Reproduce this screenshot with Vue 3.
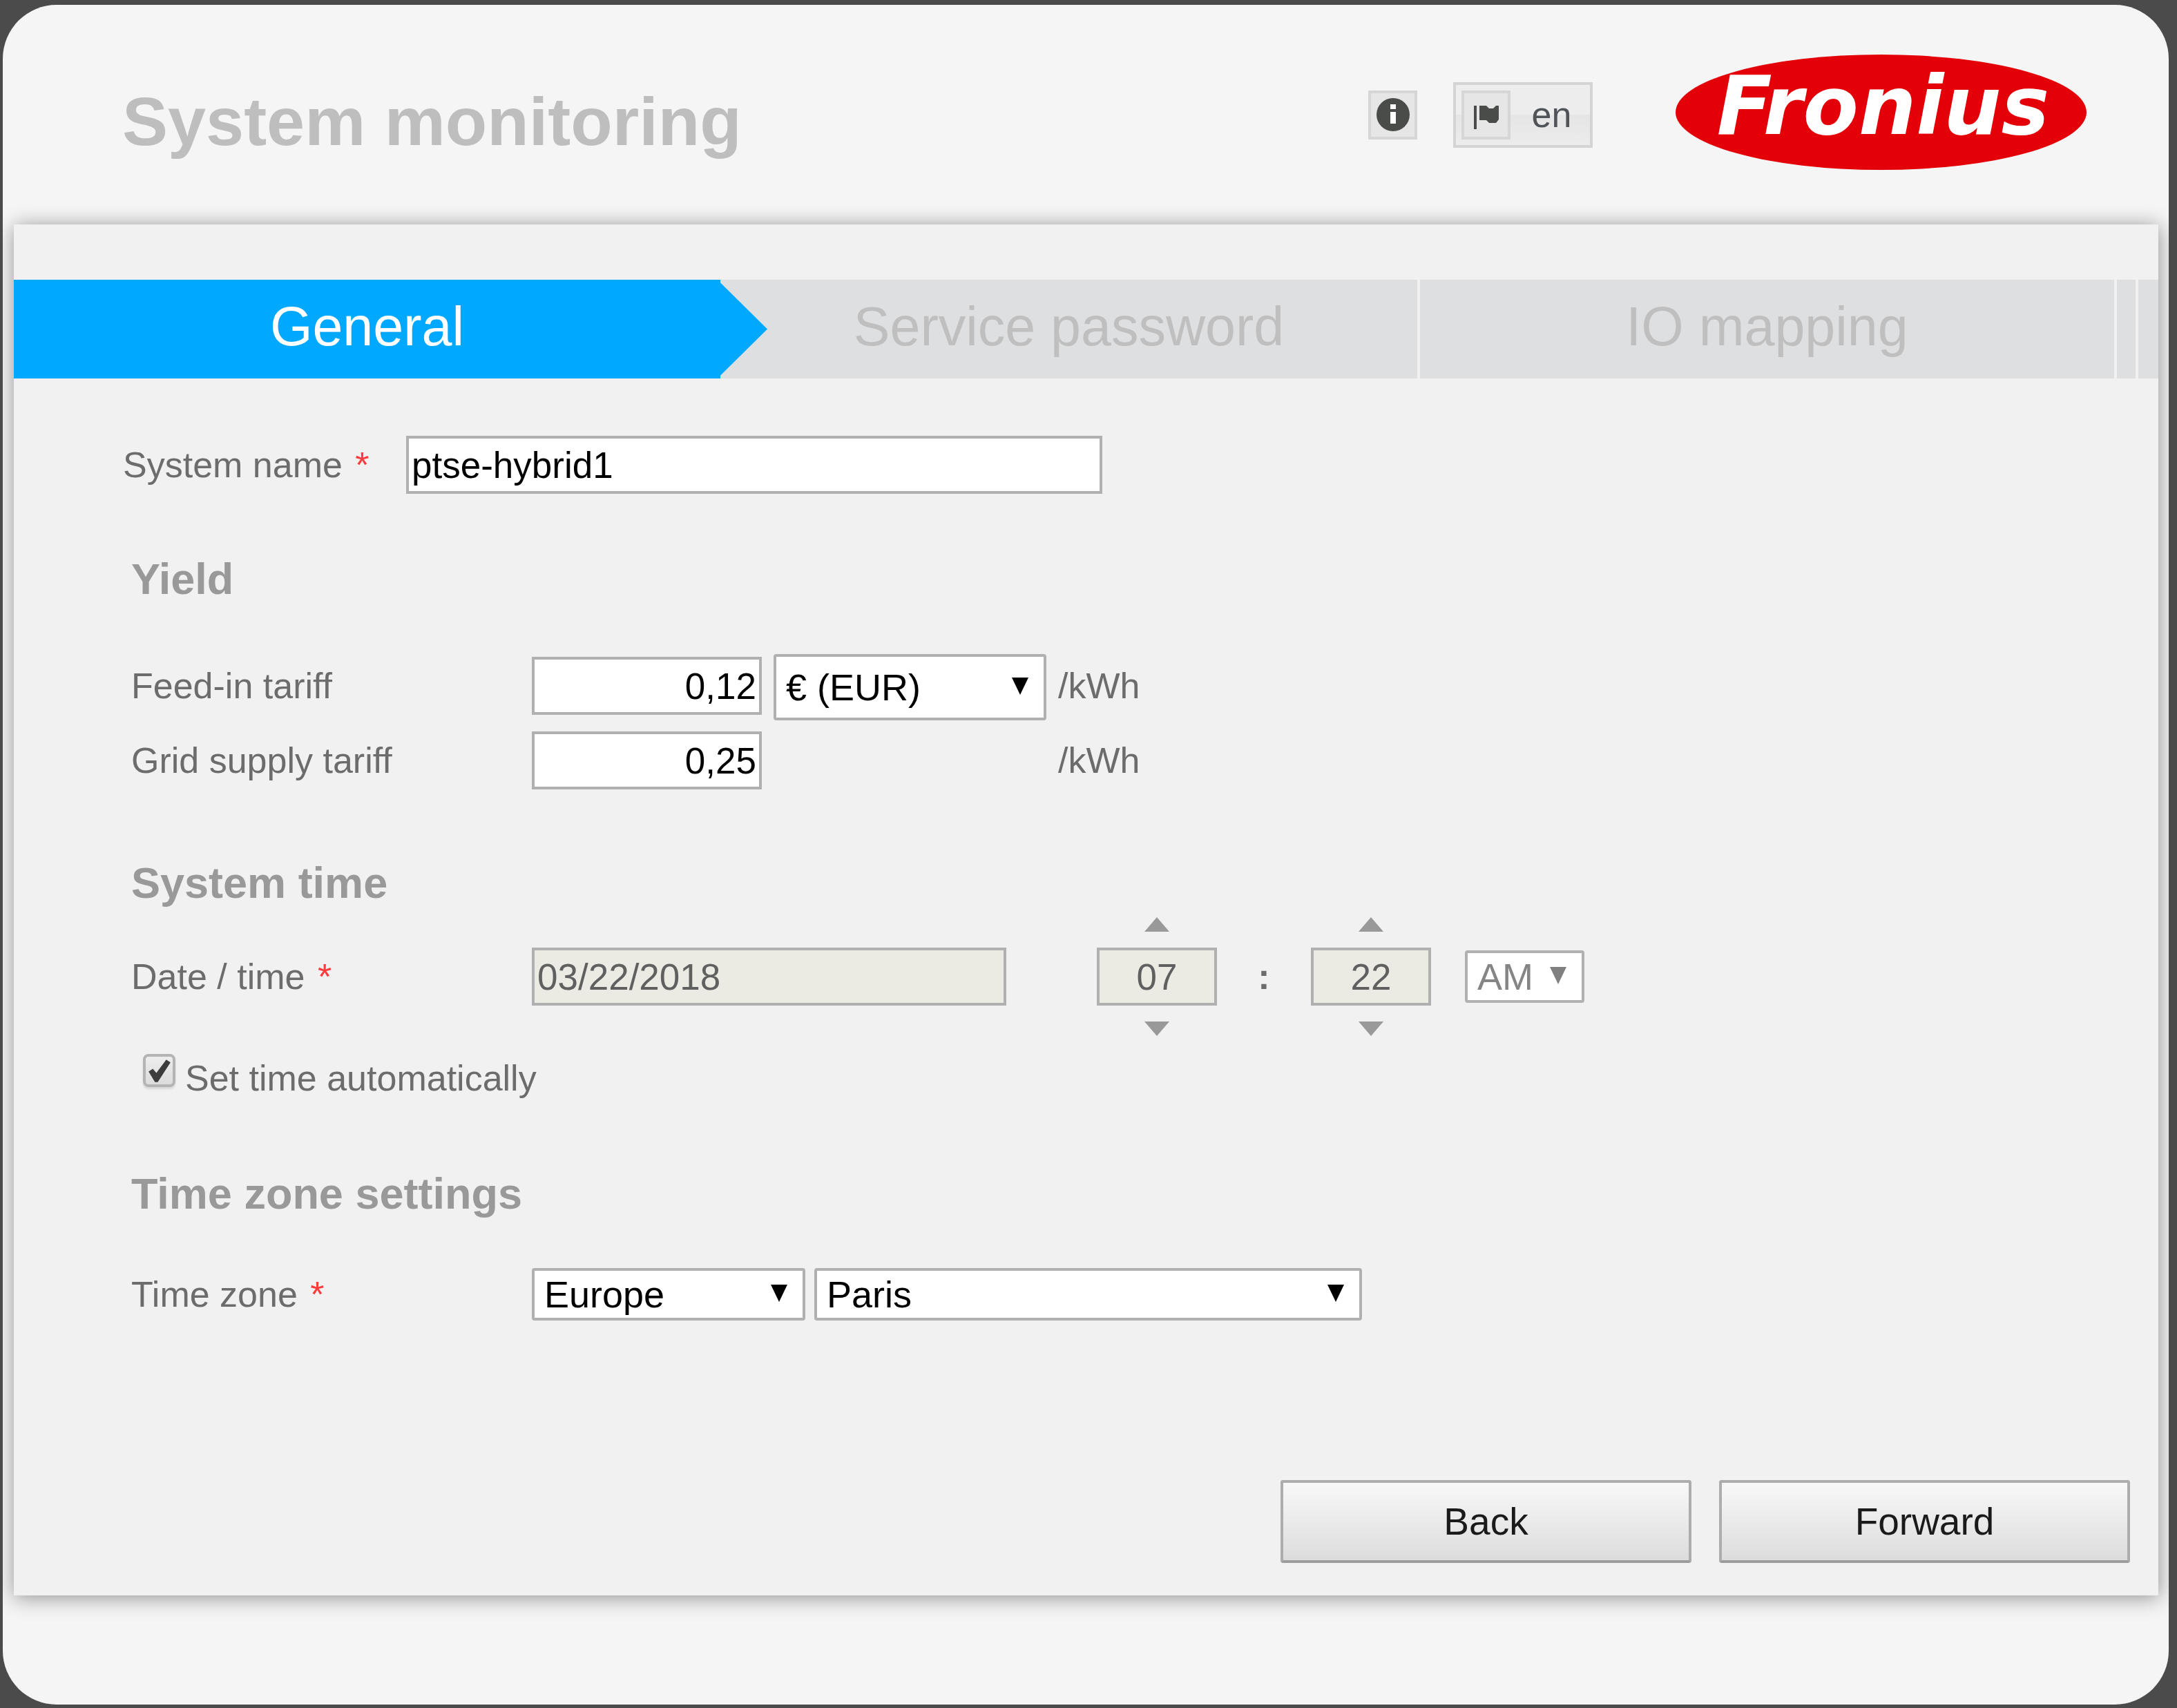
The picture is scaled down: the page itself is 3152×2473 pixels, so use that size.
<script setup>
import { ref } from 'vue'

const steps = ['General', 'Service password', 'IO mapping']
const activeStep = ref(0)

const systemName = ref('ptse-hybrid1')
const feedIn = ref('0,12')
const gridSupply = ref('0,25')
const currency = ref('€ (EUR)')
const date = ref('03/22/2018')
const hours = ref('07')
const minutes = ref('22')
const period = ref('AM')
const autoTime = ref(true)
const region = ref('Europe')
const city = ref('Paris')
</script>

<template>
  <div class="card">
    <header class="header">
      <h1 class="title">System monitoring</h1>
      <button class="icon-box" type="button" aria-label="Information">
        <svg class="icon-info" viewBox="0 0 48 48" aria-hidden="true">
          <circle cx="24" cy="24" r="24" fill="#4a4c4a" />
          <rect x="20" y="9" width="8" height="7" fill="#fff" />
          <path d="M20 20h8v17h-8z" fill="#fff" />
        </svg>
      </button>
      <button class="lang" type="button">
        <span class="icon-box">
          <svg class="icon-flag" viewBox="0 0 36 34" aria-hidden="true">
            <path d="M0 0h4v34H0zM8 0h10l4 4h6l4-4h4v20l-4 5H22l-4-4H8z" fill="#4a4c4a" />
          </svg>
        </span>
        <span class="lang-code">en</span>
      </button>
      <div class="logo">Fronius</div>
    </header>

    <main class="panel">
      <nav class="steps">
        <a
          v-for="(step, i) in steps"
          :key="step"
          href="#"
          class="step"
          :class="{ active: i === activeStep }"
          @click.prevent="activeStep = i"
        >{{ step }}</a>
        <span class="step"></span>
        <span class="step last"></span>
      </nav>

      <form class="form" @submit.prevent>
        <div class="row name-row">
          <label class="name-label" for="system-name">System name <span class="req">*</span></label>
          <input id="system-name" v-model="systemName" class="field name-field" type="text" />
        </div>

        <section class="section">
          <h2 class="heading">Yield</h2>
          <div class="tariffs">
            <div class="row tariff">
              <label class="label" for="feed-in">Feed-in tariff</label>
              <input id="feed-in" v-model="feedIn" class="field amount" type="text" />
              <span class="select currency">
                <select v-model="currency" aria-label="Currency"><option>€ (EUR)</option></select>
                <svg class="arrow" viewBox="0 0 24 25" aria-hidden="true"><path d="M0 0h24L12 25z" /></svg>
              </span>
              <span>/kWh</span>
            </div>
            <div class="row tariff">
              <label class="label" for="grid-supply">Grid supply tariff</label>
              <input id="grid-supply" v-model="gridSupply" class="field amount" type="text" />
              <span class="currency-gap"></span>
              <span>/kWh</span>
            </div>
          </div>
        </section>

        <section class="section">
          <h2 class="heading">System time</h2>
          <div class="row time-row">
            <label class="label" for="date">Date / time <span class="req">*</span></label>
            <input id="date" v-model="date" class="field date" type="text" disabled />
            <div class="spinner">
              <button type="button" aria-label="Hour up"><svg viewBox="0 0 36 21"><path d="M18 0l18 21H0z" /></svg></button>
              <input v-model="hours" class="field" type="text" aria-label="Hours" disabled />
              <button type="button" aria-label="Hour down"><svg viewBox="0 0 36 21"><path d="M0 0h36L18 21z" /></svg></button>
            </div>
            <span class="colon">:</span>
            <div class="spinner">
              <button type="button" aria-label="Minute up"><svg viewBox="0 0 36 21"><path d="M18 0l18 21H0z" /></svg></button>
              <input v-model="minutes" class="field" type="text" aria-label="Minutes" disabled />
              <button type="button" aria-label="Minute down"><svg viewBox="0 0 36 21"><path d="M0 0h36L18 21z" /></svg></button>
            </div>
            <span class="select period">
              <select v-model="period" aria-label="AM or PM" disabled><option>AM</option><option>PM</option></select>
              <svg class="arrow" viewBox="0 0 24 25" aria-hidden="true"><path d="M0 0h24L12 25z" /></svg>
            </span>
          </div>
          <div class="auto">
            <span class="check">
              <input id="auto-time" v-model="autoTime" type="checkbox" />
              <svg v-if="autoTime" viewBox="0 0 46 48" aria-hidden="true">
                <path d="M8 25l6-4 5 6L33 8l6 4-18 28h-4z" fill="#3c3c3c" />
              </svg>
            </span>
            <label for="auto-time">Set time automatically</label>
          </div>
        </section>

        <section class="section zone">
          <h2 class="heading">Time zone settings</h2>
          <div class="row zone-row">
            <label class="label" for="region">Time zone <span class="req">*</span></label>
            <span class="select region">
              <select id="region" v-model="region"><option>Europe</option></select>
              <svg class="arrow" viewBox="0 0 24 25" aria-hidden="true"><path d="M0 0h24L12 25z" /></svg>
            </span>
            <span class="select city">
              <select v-model="city" aria-label="City"><option>Paris</option></select>
              <svg class="arrow" viewBox="0 0 24 25" aria-hidden="true"><path d="M0 0h24L12 25z" /></svg>
            </span>
          </div>
        </section>

        <div class="actions">
          <button class="action" type="button">Back</button>
          <button class="action" type="submit">Forward</button>
        </div>
      </form>
    </main>
  </div>
</template>

<style>
body {
  background: #4b4b4b;
}

#app {
  display: flow-root;
}
</style>

<style scoped>
* {
  box-sizing: border-box;
}

.card {
  margin: 7px 12px 5px 4px;
  min-height: calc(100vh - 12px);
  border-radius: 78px;
  background: #f5f5f5;
  overflow: hidden;
  font-family: "Liberation Sans", Arial, sans-serif;
  font-size: 52px;
  line-height: 70px;
  color: #6c6c6c;
}

button,
input,
select {
  margin: 0;
  padding: 0;
  border: 0;
  border-radius: 0;
  font-family: inherit;
  font-size: 54px;
  color: #000;
}

/* Header */
.header {
  display: flex;
  align-items: center;
  height: 318px;
  padding: 0 119px 0 173px;
}

.title {
  margin: 20px auto 0 0;
  font-size: 99px;
  line-height: 112px;
  color: #bebebe;
}

.icon-box {
  display: flex;
  align-items: center;
  justify-content: center;
  width: 71px;
  height: 71px;
  border: 4px solid #d6d6d6;
  background: #e6e6e6;
}

.icon-info {
  width: 48px;
  height: 48px;
}

.icon-flag {
  width: 36px;
  height: 34px;
  margin-top: 8px;
}

.lang {
  display: flex;
  align-items: center;
  width: 202px;
  height: 95px;
  margin: 0 120px 0 52px;
  padding: 0 8px;
  border: 4px solid #d4d4d4;
  background: linear-gradient(#ededed 50%, #e5e5e5 50%, #ececec);
}

.lang-code {
  flex: 1;
  padding-left: 12px;
  text-align: center;
  font-size: 52px;
  line-height: 60px;
  color: #505458;
}

.logo {
  width: 595px;
  height: 167px;
  margin-bottom: 8px;
  padding-left: 6px;
  border-radius: 50%;
  background: #e30008;
  color: #fff;
  font-family: "DejaVu Sans", sans-serif;
  font-size: 117px;
  font-weight: bold;
  font-style: italic;
  line-height: 150px;
  text-align: center;
}

/* Panel and wizard steps */
.panel {
  margin: 0 15px 0 16px;
  padding-top: 80px;
  background: #f1f1f1;
  box-shadow: 1px 3px 28px rgba(0, 0, 0, 0.42);
}

.steps {
  display: grid;
  grid-template-columns: 1023fr 1013fr 1009fr 31px 29px;
}

.step {
  position: relative;
  height: 143px;
  border-right: 4px solid #f1f1f1;
  background: #dedfe1;
  color: #bfbfbf;
  font-size: 79px;
  line-height: 135px;
  text-align: center;
  text-decoration: none;
  white-space: nowrap;
}

.step.last {
  border-right: 0;
}

.step.active {
  border-right: 0;
  background: #00a9ff;
  color: #fff;
}

.step.active::after {
  content: "";
  position: absolute;
  z-index: 1;
  top: 0;
  left: 100%;
  width: 68px;
  height: 100%;
  background: #00a9ff;
  clip-path: polygon(0 3%, 100% 50%, 0 97%);
}

/* Form */
.form {
  padding: 83px 41px 47px 158px;
}

.row {
  display: flex;
  align-items: center;
}

.section {
  margin-top: 87px;
  padding-left: 12px;
}

.heading {
  margin: 0;
  font-size: 63px;
  line-height: 72px;
  color: #999;
}

.label {
  width: 580px;
}

.name-label {
  width: 410px;
}

.req {
  margin-left: 4px;
  color: #ff3b3b;
}

.field {
  height: 84px;
  padding: 0 4px;
  border: 4px solid #b0b0b0;
  background: #fff;
  font-size: 53px;
}

.field:disabled {
  background: #ebebe4;
  color: #606060;
}

.name-field {
  width: 1008px;
}

.tariffs {
  margin-top: 65px;
}

.tariff {
  height: 108px;
}

.amount {
  width: 333px;
  margin-right: 17px;
  text-align: right;
}

.select {
  position: relative;
  height: 76px;
}

.select select {
  display: block;
  width: 100%;
  height: 100%;
  padding: 0 14px;
  border: 4px solid #b0b0b0;
  border-radius: 4px;
  background: #fff;
  appearance: none;
}

.select select:disabled {
  color: #858585;
  opacity: 1;
}

.arrow {
  position: absolute;
  top: calc(50% - 14px);
  right: 26px;
  width: 24px;
  height: 25px;
  fill: #000;
  pointer-events: none;
}

.period .arrow {
  fill: #808080;
}

.currency,
.currency-gap {
  width: 395px;
  margin-right: 17px;
}

.currency {
  height: 96px;
  margin-top: 4px;
}

.time-row {
  margin-top: 14px;
}

.date {
  width: 687px;
  margin-right: 131px;
}

.spinner {
  display: flex;
  flex-direction: column;
  align-items: center;
  gap: 23px;
  width: 174px;
}

.spinner .field {
  width: 100%;
  text-align: center;
}

.spinner button {
  width: 36px;
  height: 21px;
  background: none;
}

.spinner svg {
  display: block;
  fill: #999;
}

.colon {
  width: 136px;
  text-align: center;
  font-weight: bold;
}

.period {
  width: 173px;
  margin-left: 49px;
}

.auto {
  display: flex;
  gap: 14px;
  margin: 26px 0 0 17px;
}

.check {
  position: relative;
  width: 47px;
  height: 48px;
}

.check input {
  display: block;
  width: 100%;
  height: 100%;
  border: 4px solid #b4b4b4;
  border-radius: 8px;
  background: linear-gradient(#ededed, #dcdcdc);
  box-shadow: 0 3px 3px rgba(0, 0, 0, 0.1);
  appearance: none;
}

.check svg {
  position: absolute;
  inset: 0;
  pointer-events: none;
}

.zone {
  margin-top: 96px;
}

.zone-row {
  gap: 13px;
  margin-top: 72px;
}

.zone-row .label {
  width: 567px;
}

.region {
  width: 396px;
}

.city {
  width: 793px;
}

.actions {
  display: flex;
  justify-content: flex-end;
  gap: 40px;
  margin-top: 231px;
}

.action {
  width: 595px;
  height: 120px;
  border: 4px solid #adadad;
  border-bottom-color: #9c9c9c;
  border-radius: 4px;
  background: linear-gradient(#f8f8f8, #dcdcdc);
  font-size: 55px;
  color: #1a1a1a;
}
</style>
